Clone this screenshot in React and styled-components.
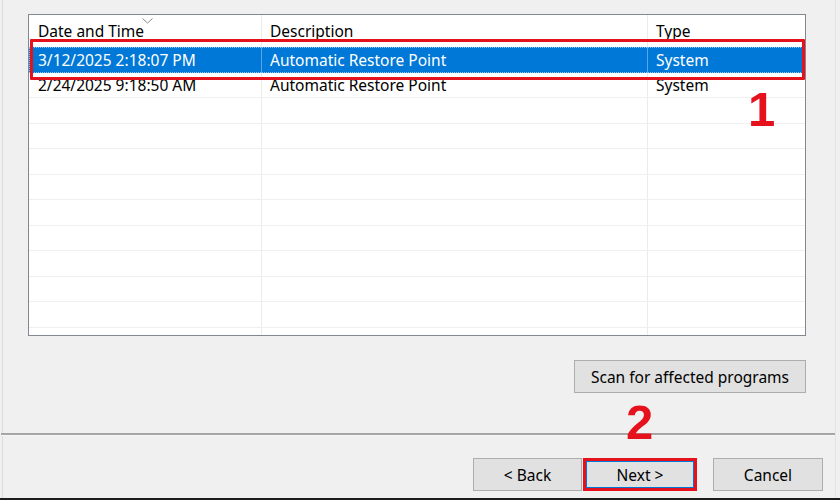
import React from 'react';
import styled, { createGlobalStyle } from 'styled-components';

const Global = createGlobalStyle`
  body {
    margin: 0;
    background: #f0f0f0;
    font-family: "Noto Sans", "Open Sans", sans-serif;
  }
`;

const Frame = styled.div`
  position: relative;
  width: 840px;
  height: 500px;
  box-sizing: border-box;
  display: flex;
  background: #f0f0f0;
  border-bottom: 2px solid #1c1c1c;
  overflow: hidden;
`;

const Panel = styled.div`
  flex: 1;
  display: flex;
  flex-direction: column;
  margin: 0 4px 0 2px;
  border-left: 1px solid #dcdcdc;
  border-right: 1px solid #e4e4e4;
`;

const ListWrap = styled.div`
  position: relative;
  height: 322px;
  margin: 14px 29px 0 25px;
`;

const ListBox = styled.div`
  height: 100%;
  box-sizing: border-box;
  border: 1px solid #828790;
  background: #fff;
  overflow: hidden;
`;

const Grid = styled.div`
  display: grid;
  grid-template-columns: 233px 386px 1fr;
  height: ${p => p.$h}px;
  background: ${p => (p.$selected ? '#0078d7' : 'transparent')};
  color: ${p => (p.$selected ? '#fff' : '#000')};
  border-bottom: ${p => (p.$line ? '1px solid #efefef' : 'none')};
  box-sizing: border-box;
  outline: ${p => (p.$selected ? '1px dotted rgba(255,255,255,0.55)' : 'none')};
  outline-offset: -1px;
`;

const Cell = styled.div`
  position: relative;
  display: flex;
  align-items: center;
  padding-left: ${p => p.$pad}px;
  font-size: 15.5px;
  white-space: nowrap;
  border-right: ${p => (p.$last ? 'none' : p.$selected ? '1px solid #5aa3e6' : '1px solid #ebebeb')};
`;

const SortArrow = styled.svg`
  position: absolute;
  left: 113px;
  top: 3px;
`;

const RedBox = styled.div`
  position: absolute;
  left: 2px;
  top: 25px;
  width: 775px;
  height: 41px;
  box-sizing: border-box;
  border: 3.5px solid #e5121d;
  border-radius: 1px;
  pointer-events: none;
`;

const Mark = styled.div`
  position: absolute;
  left: ${p => p.$x}px;
  top: ${p => p.$y}px;
  font-family: "Liberation Sans", Arial, sans-serif;
  font-weight: 700;
  font-size: 49px;
  line-height: 48px;
  color: #e5121d;
`;

const ActionRow = styled.div`
  display: flex;
  justify-content: flex-end;
  margin-top: ${p => p.$top}px;
  padding-right: ${p => p.$right}px;
`;

const Button = styled.button`
  height: 33px;
  width: ${p => p.$w}px;
  margin-left: ${p => p.$space || 0}px;
  box-sizing: border-box;
  background: #e1e1e1;
  border: ${p => (p.$marked ? '3px solid #e5121d' : '1px solid #adadad')};
  box-shadow: ${p => (p.$marked ? 'inset 0 0 0 1px #0078d7' : 'none')};
  font-family: "Noto Sans", "Open Sans", sans-serif;
  font-size: 15.5px;
  color: #000;
  padding: 0;
`;

const Divider = styled.div`
  margin-top: 40px;
  margin-left: -2px;
  height: 2px;
  background: #a6a6a6;
  border-bottom: 1px solid #f7f7f7;
`;

const rows = [
  ['3/12/2025 2:18:07 PM', 'Automatic Restore Point', 'System'],
  ['2/24/2025 9:18:50 AM', 'Automatic Restore Point', 'System'],
  ...Array.from({ length: 10 }, () => ['', '', '']),
];

const pads = [9, 8, 8];

export default function App() {
  return (
    <>
      <Global />
      <Frame>
        <Panel>
          <ListWrap>
            <ListBox>
              <Grid $h={32}>
                <Cell $pad={9}>
                  Date and Time
                  <SortArrow width="11" height="6" viewBox="0 0 11 6">
                    <path d="M0.5 0.5 L5.5 5 L10.5 0.5" fill="none" stroke="#8a8a8a" strokeWidth="1" />
                  </SortArrow>
                </Cell>
                <Cell $pad={8}>Description</Cell>
                <Cell $pad={8} $last>Type</Cell>
              </Grid>
              {rows.map((r, i) => (
                <Grid key={i} $h={25.5} $selected={i === 0} $line={i > 0}>
                  {r.map((t, j) => (
                    <Cell key={j} $pad={pads[j]} $last={j === 2} $selected={i === 0}>
                      {t}
                    </Cell>
                  ))}
                </Grid>
              ))}
            </ListBox>
            <RedBox />
            <Mark $x={720} $y={71}>1</Mark>
          </ListWrap>

          <ActionRow $top={24} $right={29}>
            <Button $w={232}>Scan for affected programs</Button>
          </ActionRow>

          <Divider />

          <ActionRow $top={22} $right={12}>
            <Button $w={109}>&lt; Back</Button>
            <Button $w={114} $space={1} $marked>Next &gt;</Button>
            <Button $w={110} $space={16}>Cancel</Button>
          </ActionRow>
        </Panel>
        <Mark $x={626} $y={398}>2</Mark>
      </Frame>
    </>
  );
}
